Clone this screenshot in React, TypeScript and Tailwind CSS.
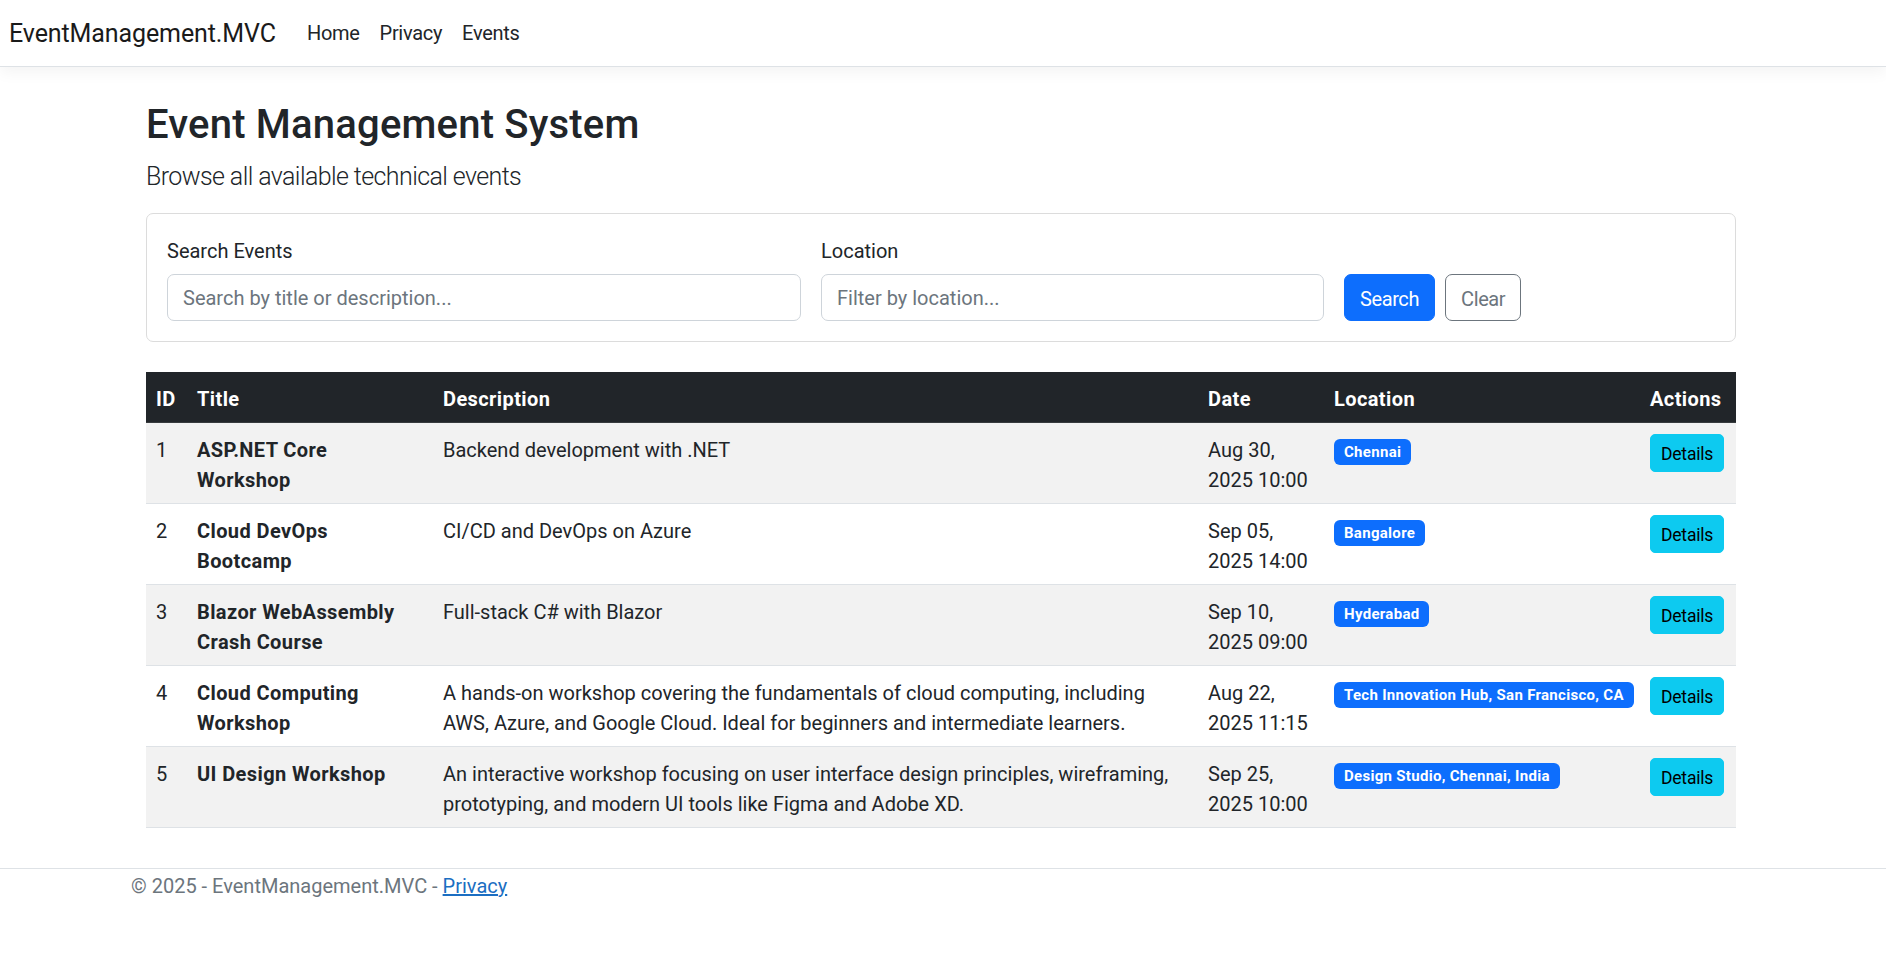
import React from "react";

type Ev = {
  id: number;
  title: string;
  description: string;
  date1: string;
  date2: string;
  location: string;
};

const events: Ev[] = [
  {
    id: 1,
    title: "ASP.NET Core Workshop",
    description: "Backend development with .NET",
    date1: "Aug 30,",
    date2: "2025 10:00",
    location: "Chennai",
  },
  {
    id: 2,
    title: "Cloud DevOps Bootcamp",
    description: "CI/CD and DevOps on Azure",
    date1: "Sep 05,",
    date2: "2025 14:00",
    location: "Bangalore",
  },
  {
    id: 3,
    title: "Blazor WebAssembly Crash Course",
    description: "Full-stack C# with Blazor",
    date1: "Sep 10,",
    date2: "2025 09:00",
    location: "Hyderabad",
  },
  {
    id: 4,
    title: "Cloud Computing Workshop",
    description:
      "A hands-on workshop covering the fundamentals of cloud computing, including AWS, Azure, and Google Cloud. Ideal for beginners and intermediate learners.",
    date1: "Aug 22,",
    date2: "2025 11:15",
    location: "Tech Innovation Hub, San Francisco, CA",
  },
  {
    id: 5,
    title: "UI Design Workshop",
    description:
      "An interactive workshop focusing on user interface design principles, wireframing, prototyping, and modern UI tools like Figma and Adobe XD.",
    date1: "Sep 25,",
    date2: "2025 10:00",
    location: "Design Studio, Chennai, India",
  },
];

export default function App() {
  return (
    <div className="min-h-screen bg-white text-[#212529] font-[Roboto,'Segoe_UI',Arial,sans-serif]">
      {/* Navbar */}
      <nav className="h-[67px] border-b border-[#dee2e6] shadow-[0_5px_15px_rgba(0,0,0,0.05)] flex items-center pl-[9px]">
        <a href="#" className="text-[25px] leading-[37px] text-[#1a1a1a] mr-[21px] tracking-[-0.1px]">
          EventManagement.MVC
        </a>
        <a href="#" className="px-[10px] text-[20px] leading-[30px] text-[#212529] tracking-[-0.3px]">
          Home
        </a>
        <a href="#" className="px-[10px] text-[20px] leading-[30px] text-[#212529] tracking-[-0.3px]">
          Privacy
        </a>
        <a href="#" className="px-[10px] text-[20px] leading-[30px] text-[#212529] tracking-[-0.3px]">
          Events
        </a>
      </nav>

      {/* Main */}
      <main className="pl-[146px] pt-[34px]">
        <div className="w-[1590px]">
          <h1 className="text-[40px] leading-[48px] font-medium mb-[9px] tracking-[0.2px]">Event Management System</h1>
          <p className="text-[25px] leading-[38px] font-light mb-[17px] tracking-[-0.6px]">
            Browse all available technical events
          </p>

          {/* Search card */}
          <div className="border border-[#dcdcdc] rounded-[7px] p-[20px] mb-[30px]">
            <div className="flex items-end gap-[20px]">
              <div className="w-[634px]">
                <label className="block text-[20px] leading-[30px] pt-[2px] mb-[8px]">Search Events</label>
                <input
                  type="text"
                  placeholder="Search by title or description..."
                  className="w-full h-[47px] border border-[#ced4da] rounded-[7px] px-[15px] pt-[1px] text-[20px] leading-[30px] placeholder:text-[#6c757d] outline-none"
                />
              </div>
              <div className="w-[503px]">
                <label className="block text-[20px] leading-[30px] pt-[2px] mb-[8px]">Location</label>
                <input
                  type="text"
                  placeholder="Filter by location..."
                  className="w-full h-[47px] border border-[#ced4da] rounded-[7px] px-[15px] pt-[1px] text-[20px] leading-[30px] placeholder:text-[#6c757d] outline-none"
                />
              </div>
              <div className="flex items-center">
                <button className="h-[47px] px-[15px] pt-[2px] text-[20px] leading-[30px] tracking-[-0.4px] text-white bg-[#0d6efd] border border-[#0d6efd] rounded-[7px]">
                  Search
                </button>
                <button className="ml-[10px] h-[47px] px-[15px] pt-[2px] text-[20px] leading-[30px] tracking-[-0.4px] text-[#6c757d] bg-white border border-[#6c757d] rounded-[7px]">
                  Clear
                </button>
              </div>
            </div>
          </div>

          {/* Table */}
          <table className="w-[1590px] table-fixed border-collapse text-[20px] leading-[30px]">
            <colgroup>
              <col className="w-[41px]" />
              <col className="w-[246px]" />
              <col className="w-[765px]" />
              <col className="w-[126px]" />
              <col className="w-[316px]" />
              <col className="w-[96px]" />
            </colgroup>
            <thead>
              <tr className="bg-[#212529] text-white border-b border-[#373b3e]">
                <th className="text-left font-bold tracking-[0.4px] px-[10px] pt-[12px] pb-[8px]">ID</th>
                <th className="text-left font-bold tracking-[0.4px] px-[10px] pt-[12px] pb-[8px]">Title</th>
                <th className="text-left font-bold tracking-[0.4px] px-[10px] pt-[12px] pb-[8px]">Description</th>
                <th className="text-left font-bold tracking-[0.4px] px-[10px] pt-[12px] pb-[8px]">Date</th>
                <th className="text-left font-bold tracking-[0.4px] px-[10px] pt-[12px] pb-[8px]">Location</th>
                <th className="text-left font-bold tracking-[0.4px] px-[10px] pt-[12px] pb-[8px]">Actions</th>
              </tr>
            </thead>
            <tbody>
              {events.map((e, i) => (
                <tr
                  key={e.id}
                  className={`border-b border-[#dee2e6] ${i % 2 === 0 ? "bg-[#f2f2f2]" : "bg-white"}`}
                >
                  <td className="px-[10px] pt-[12px] pb-[8px] align-top">{e.id}</td>
                  <td className="px-[10px] pt-[12px] pb-[8px] align-top font-bold tracking-[0.4px]">{e.title}</td>
                  <td className="px-[10px] pt-[12px] pb-[8px] align-top">{e.description}</td>
                  <td className="px-[10px] pt-[12px] pb-[8px] align-top">
                    {e.date1}
                    <br />
                    {e.date2}
                  </td>
                  <td className="px-[10px] pt-[12px] pb-[8px] align-top">
                    <div className="flex pt-[4px]">
                      <span className="inline-block whitespace-nowrap bg-[#0d6efd] text-white text-[15px] leading-[15px] font-bold tracking-[0.3px] px-[10px] py-[5.5px] rounded-[6px]">
                        {e.location}
                      </span>
                    </div>
                  </td>
                  <td className="px-[10px] pt-[11px] pb-[8px] align-top">
                    <button className="bg-[#0dcaf0] border border-[#0dcaf0] text-black text-[17.5px] leading-[26px] tracking-[-0.2px] px-[10px] pt-[6px] pb-[4px] rounded-[5px]">
                      Details
                    </button>
                  </td>
                </tr>
              ))}
            </tbody>
          </table>
        </div>
      </main>

      {/* Footer */}
      <footer className="mt-[40px] border-t border-[#dee2e6] pl-[131px] pt-[2px] text-[20px] leading-[30px] text-[#6c757d] whitespace-nowrap">
        © 2025 - EventManagement.MVC -{" "}
        <a href="#" className="text-[#1b6ec2] underline">
          Privacy
        </a>
      </footer>
    </div>
  );
}
